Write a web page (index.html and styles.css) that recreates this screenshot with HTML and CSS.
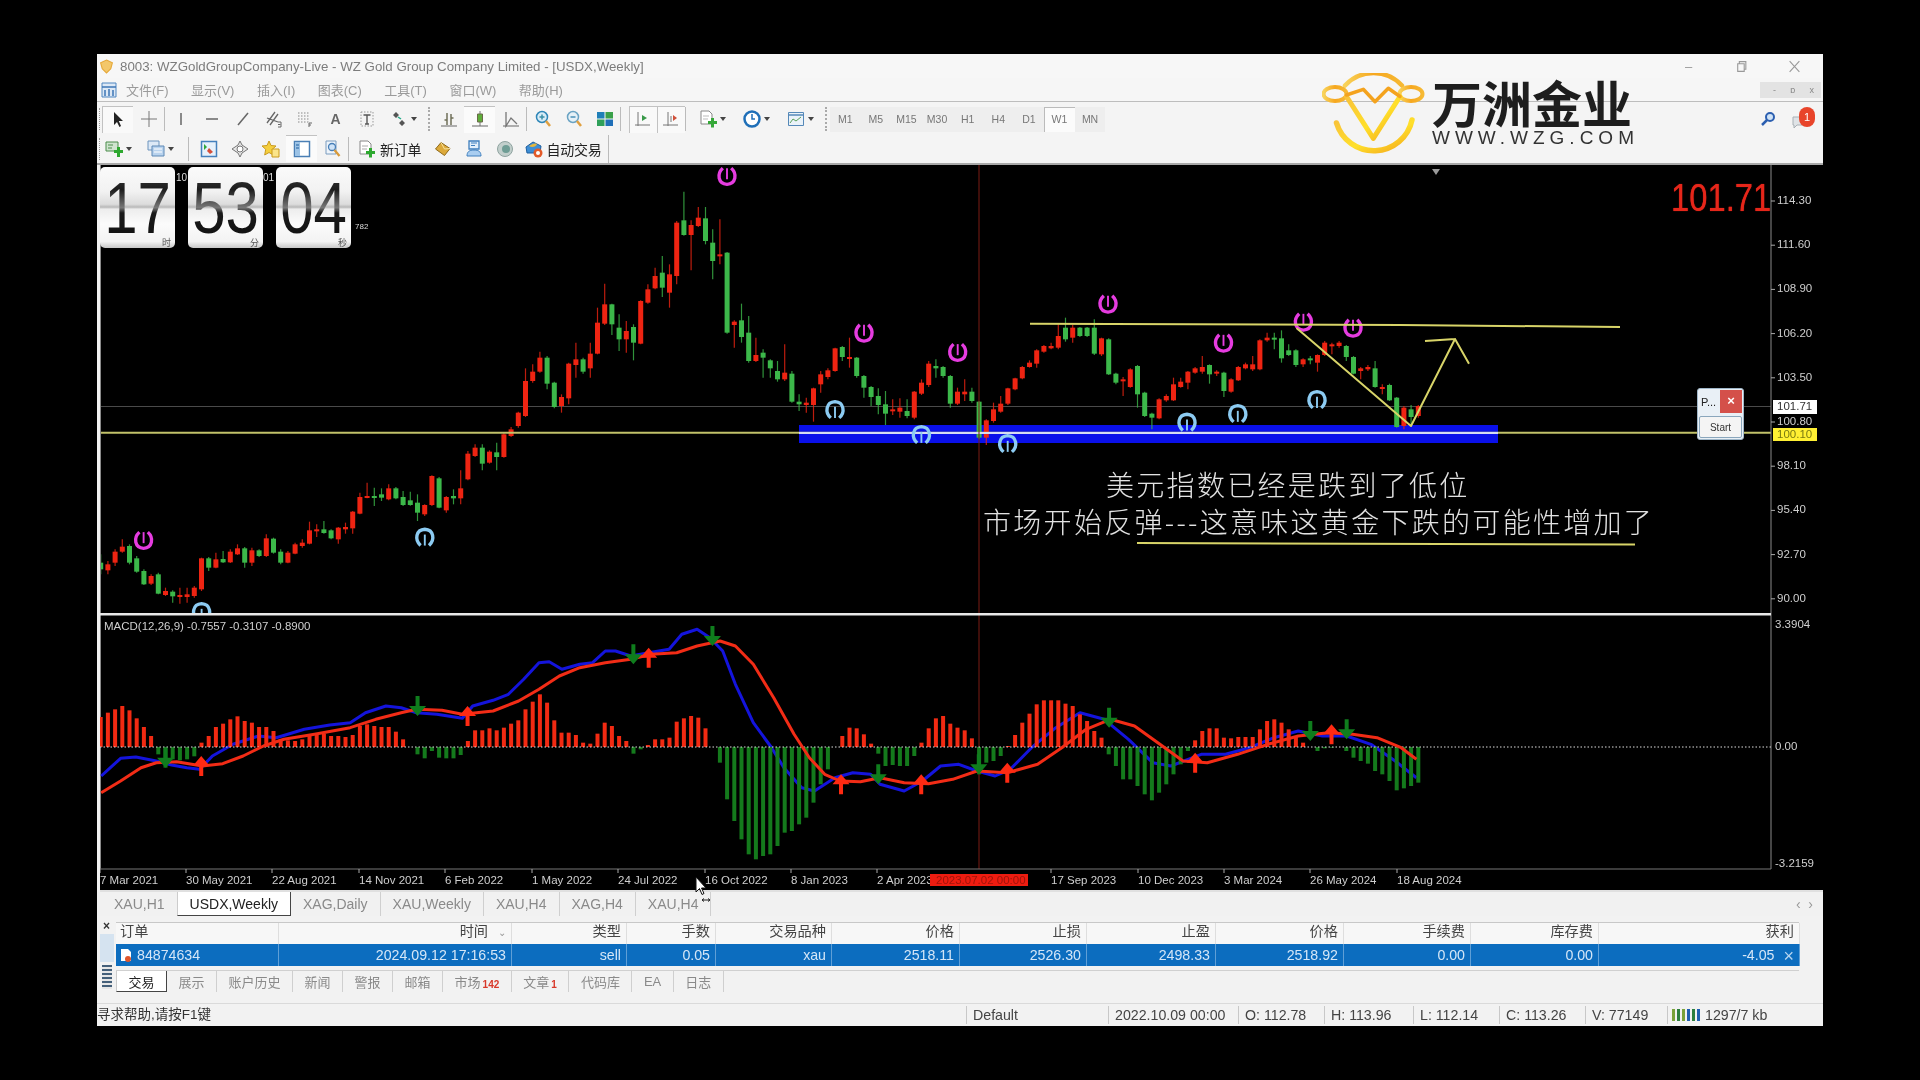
FILE: index.html
```html
<!DOCTYPE html>
<html lang="zh">
<head>
<meta charset="utf-8">
<title>MetaTrader - USDX,Weekly</title>
<link rel="stylesheet" href="styles.css">
</head>
<body>
<div class="window">
  <header class="titlebar">
    <svg class="appicon" viewBox="0 0 14 14"><path d="M7 1 12.5 3.5 11 9 7 13 3 9 1.500 3.500Z" fill="#f3c76a" stroke="#e6a93a"/></svg>
    <span class="title">8003: WZGoldGroupCompany-Live - WZ Gold Group Company Limited - [USDX,Weekly]</span>
    <div class="winbtns">
      <span class="winbtn">–</span>
      <svg class="winbtn" viewBox="0 0 12 12"><path d="M2.500 3.500h6v7h-6zM4 3.500V1.500h6v7H8.500" fill="none" stroke="#999"/></svg>
      <svg class="winbtn" viewBox="0 0 12 12"><path d="M1.500 1 10.500 11M10.500 1 1.500 11" stroke="#999" fill="none"/></svg>
    </div>
  </header>

  <nav class="menubar">
    <svg class="menuicon" viewBox="0 0 16 16"><path d="M1 1h14v14H1z" fill="#dce8f5" stroke="#4f86c0"/><path d="M1 5h14M4 14V8M8 14V7M12 14V8" stroke="#3d76b5" stroke-width="1.500"/></svg>
    <span class="menu">文件(F)</span><span class="menu">显示(V)</span><span class="menu">插入(I)</span><span class="menu">图表(C)</span><span class="menu">工具(T)</span><span class="menu">窗口(W)</span><span class="menu">帮助(H)</span>
    <div class="mdibtns"><span>-</span><span>ɒ</span><span>x</span></div>
  </nav>

  <div class="toolbar first">
    <span class="grip"></span>
    <button class="tool pressed"><svg viewBox="0 0 18 18"><path d="M5 2v13l3-3 2.500 5 1.500-1-2.200-5H14Z" fill="#222"/></svg></button>
    <button class="tool"><svg viewBox="0 0 18 18"><path d="M9 1v16M1 9h16" stroke="#777" fill="none"/></svg></button>
    <span class="sep"></span>
    <button class="tool"><svg viewBox="0 0 18 18"><path d="M9 3v12" stroke="#666" stroke-width="1.500"/></svg></button>
    <button class="tool"><svg viewBox="0 0 18 18"><path d="M3 9h12" stroke="#666" stroke-width="1.500"/></svg></button>
    <button class="tool"><svg viewBox="0 0 18 18"><path d="M4 15 14 3" stroke="#666" stroke-width="1.500"/></svg></button>
    <button class="tool"><svg viewBox="0 0 18 18"><path d="M2 13 10 2M5 15 13 4M2 8l11 4" stroke="#666" stroke-width="1.300" fill="none"/><path d="M13 12h3v5h-3m0-2.500h2.500" stroke="#666" fill="none"/></svg></button>
    <button class="tool"><svg viewBox="0 0 18 18"><path d="M2 3h11M2 6h11M2 9h11M2 12h11" stroke="#888" stroke-dasharray="1.500 1.500" fill="none"/><path d="M13 13v4m0-4h3m-3 2h2" stroke="#666" fill="none"/></svg></button>
    <button class="tool"><span class="toolA">A</span></button>
    <button class="tool"><svg viewBox="0 0 18 18"><path d="M3 2h12v14H3z" stroke="#999" stroke-dasharray="1.500 1.500" fill="none"/><path d="M5.500 5h7M9 5v9M7 14h4" stroke="#555" stroke-width="1.400" fill="none"/></svg></button>
    <button class="tool withdd shapes"><svg viewBox="0 0 18 18"><path d="M3 5 6 2l3 3-3 3ZM9 13l3-3 3 3-3 3Z" fill="#555"/><path d="M8 7l3 2" stroke="#2a8" stroke-width="1.500"/></svg><i class="dd"></i></button>
    <span class="dsep"></span>
    <button class="tool"><svg viewBox="0 0 18 18"><path d="M7 3v12M4.500 10H7M11 4v11M11 8h2.500" stroke="#6f6f58" stroke-width="1.500" fill="none"/><path d="M1 16h16" stroke="#666"/></svg></button>
    <button class="tool lit"><svg viewBox="0 0 18 18"><path d="M9 1v15" stroke="#777"/><path d="M6.500 4h5v8h-5z" fill="#5fae3a" stroke="#6a6a4a"/><path d="M1 16h16" stroke="#666"/></svg></button>
    <button class="tool"><svg viewBox="0 0 18 18"><path d="M4 2v14l5-8 6 6" stroke="#777" stroke-width="1.300" fill="none"/><path d="M1 16h16" stroke="#666"/></svg></button>
    <span class="sep"></span>
    <button class="tool"><svg viewBox="0 0 18 18"><circle cx="8" cy="7" r="5.500" fill="#d7ecf7" stroke="#2e86b8" stroke-width="1.500"/><path d="M5.500 7h5M8 4.500v5" stroke="#3a8fa8" stroke-width="1.500"/><path d="m12 11 4 5" stroke="#e0a040" stroke-width="2.500"/></svg></button>
    <button class="tool"><svg viewBox="0 0 18 18"><circle cx="8" cy="7" r="5.500" fill="#e6f1f7" stroke="#6aa3c3" stroke-width="1.500"/><path d="M5.500 7h5" stroke="#4a90b8" stroke-width="1.500"/><path d="m12 11 4 5" stroke="#e0a040" stroke-width="2.500"/></svg></button>
    <button class="tool"><svg viewBox="0 0 18 18"><path d="M1 2h7.500v6.500H1z" fill="#1f7fb8"/><path d="M9.500 2H17v6.500H9.500z" fill="#3aa04a"/><path d="M1 9.500h7.500V16H1z" fill="#2fa05a"/><path d="M9.500 9.500H17V16H9.500z" fill="#1f6fb8"/></svg></button>
    <span class="sep gapR"></span>
    <button class="tool nar pressed"><svg viewBox="0 0 18 18"><path d="M4 2v14M1 15h15" stroke="#777" fill="none"/><path d="M8 5v6l5-3Z" fill="#3a9a4a"/></svg></button>
    <button class="tool nar pressed"><svg viewBox="0 0 18 18"><path d="M6 2v14M1 15h15" stroke="#777" fill="none"/><path d="M11 5v6l4-3Z" fill="#d0503a"/><path d="M9 6v6" stroke="#777"/></svg></button>
    <span class="sep gapS"></span>
    <button class="tool withdd"><svg viewBox="0 0 18 18"><path d="M2 1h8l3 3v10H2z" fill="#fff" stroke="#888"/><path d="M4 6h6M4 9h5" stroke="#bbb"/><path d="M9 11h3V8h3v3h3v3h-3v3.500h-3V14H9z" fill="#35a838"/></svg><i class="dd"></i></button>
    <button class="tool withdd"><svg viewBox="0 0 18 18"><circle cx="9" cy="9" r="7.500" fill="#fff" stroke="#1f6fb8" stroke-width="2.500"/><path d="M9 4v5h3" stroke="#1f6fb8" stroke-width="1.500" fill="none"/></svg><i class="dd"></i></button>
    <button class="tool withdd"><svg viewBox="0 0 18 18"><path d="M1.500 2.500h15v13h-15z" fill="#eaf2f9" stroke="#5588b8"/><path d="M1.500 5h15" stroke="#5588b8" stroke-width="1.500"/><path d="m3 13 3-4 3 2 5-4" stroke="#5aa05a" fill="none"/></svg><i class="dd"></i></button>
    <span class="dsep"></span>
    <button class="tf">M1</button><button class="tf">M5</button><button class="tf">M15</button><button class="tf">M30</button><button class="tf">H1</button><button class="tf">H4</button><button class="tf">D1</button><button class="tf active">W1</button><button class="tf">MN</button>
    <div class="helpers">
      <svg class="search" viewBox="0 0 16 16"><circle cx="10" cy="6" r="4" fill="#cfe3f7" stroke="#2c5fb0" stroke-width="2"/><path d="M7 9 2 14" stroke="#2c5fb0" stroke-width="2.500"/></svg>
      <span class="bubble"><svg viewBox="0 0 18 18"><path d="M2 5h11v8H6l-3 3v-3H2z" fill="#dfe3e6" stroke="#a9b0b5"/></svg><b class="badge">1</b></span>
    </div>
  </div>

  <div class="toolbar second">
    <span class="grip"></span>
    <button class="tool withdd tight"><svg viewBox="0 0 18 18"><path d="M1 2h12v9H1z" fill="#cfe4cf" stroke="#4a8c4a"/><path d="M3 5h5M3 8h4" stroke="#4a8c4a"/><path d="M9 10h3V7h3v3h3v3h-3v4h-3v-4H9z" fill="#2da82f"/></svg><i class="dd"></i></button>
    <button class="tool withdd tight shift"><svg viewBox="0 0 18 18"><path d="M1 1h11v9H1z" fill="#dde9f6" stroke="#6d94bd"/><path d="M5 6h12v10H5z" fill="#b9d3ee" stroke="#5d88b5"/><path d="M7 9h8M7 12h8" stroke="#fff"/></svg><i class="dd"></i></button>
    <span class="sep far"></span>
    <button class="tool"><svg viewBox="0 0 18 18"><path d="M1.500 1.500h15v15h-15z" fill="#e6f1fb" stroke="#4480bd" stroke-width="1.500"/><path d="M4 4l3 3-3 3z" fill="#2fa83a"/><path d="m9 8 4 4-3 2-3-3z" fill="#d64f3a"/></svg></button>
    <button class="tool"><svg viewBox="0 0 18 18"><path d="M9 1 11 5 17 9l-6 4-2 4-2-4L1 9l6-4Z" fill="#e6e6e6" stroke="#777"/><circle cx="9" cy="9" r="3" fill="#fff" stroke="#777"/></svg></button>
    <button class="tool"><svg viewBox="0 0 18 18"><path d="m7 1 2 4.500 5 .5-3.700 3.300L11.300 15 7 12.500 2.700 15l1-5.700L0 6l5-.5z" fill="#f5cf3d" stroke="#c99a1f"/><path d="M10 9h7v8h-7z" fill="#fbe58a" stroke="#c99a1f"/></svg></button>
    <button class="tool lit"><svg viewBox="0 0 18 18"><path d="M1.500 1.500h15v15h-15z" fill="#fff" stroke="#4a7fb5" stroke-width="1.500"/><path d="M2 2h5v14H2z" fill="#9cc3e6"/><path d="M3 5h3M3 8h3" stroke="#1f5f9f"/></svg></button>
    <button class="tool"><svg viewBox="0 0 18 18"><path d="M2 1h10v13H2z" fill="#eef4fa" stroke="#7a9cbf"/><circle cx="8" cy="7" r="3.500" fill="#cfe3f7" stroke="#477fb8" stroke-width="1.300"/><path d="m10.500 10 5 6" stroke="#d89a3a" stroke-width="2.300"/></svg></button>
    <span class="sep"></span>
    <button class="tool label order"><svg viewBox="0 0 18 18"><path d="M2 1h8l3 3v10H2z" fill="#fff" stroke="#888"/><path d="M4 6h6M4 9h5" stroke="#aaa"/><path d="M8 11h3V8h3v3h3v3h-3v3.500h-3V14H8z" fill="#2da82f"/></svg><span>新订单</span></button>
    <button class="tool"><svg viewBox="0 0 18 18"><path d="M1.500 9 7 2.500 16 8.500 10.500 15.500Z" fill="#dca93a" stroke="#8f6a1a"/><path d="M7 2.500 10.500 9 16 8.500" stroke="#f7e3a0" fill="none"/></svg></button>
    <button class="tool"><svg viewBox="0 0 18 18"><path d="M4 1h10v8H4z" fill="#e2effb" stroke="#3f7fbe" stroke-width="1.300"/><path d="M6 3h6M6 5.500h4" stroke="#3f7fbe"/><path d="M2 16c0-4 2-6 7-6s7 2 7 6z" fill="#a9cdf0" stroke="#3f7fbe"/></svg></button>
    <button class="tool"><svg viewBox="0 0 18 18"><circle cx="9" cy="9" r="7.500" fill="#c2cfcc" stroke="#8fa3a0"/><circle cx="10" cy="9" r="4" fill="#6f9d95"/></svg></button>
    <button class="tool label auto"><svg viewBox="0 0 18 18"><path d="M1 7 8 2l8 4-1 7H2z" fill="#3d8ed6" stroke="#1f5f9f"/><path d="M4 6c3-2 6-3 8-2-1 3-5 4-8 2z" fill="#e6b73c"/><circle cx="13" cy="13" r="4.500" fill="#e35a28"/><circle cx="13" cy="13" r="2" fill="#fff"/></svg><span>自动交易</span></button>
    <span class="sep end"></span>
  </div>

  <main class="chart">
    <svg id="plot" class="plot" viewBox="100 164 1723 727"></svg>

    <div class="clock">
      <div class="card"><span class="digits">17</span><small class="unit">时</small></div>
      <div class="card"><span class="digits">53</span><small class="unit">分</small></div>
      <div class="card"><span class="digits">04</span><small class="unit">秒</small></div>
      <span class="mini m10">10</span><span class="mini m01">01</span><span class="mini m782">782</span>
    </div>

    <div class="bigprice">101.71</div>

    <div class="script">
      <div class="scripthead"><span>P...</span><b class="scriptclose">×</b></div>
      <button class="scriptstart">Start</button>
    </div>

    <p class="note noteA">美元指数已经是跌到了低位</p>
    <p class="note noteB">市场开始反弹---这意味这黄金下跌的可能性增加了</p>
  </main>

  <div class="charttabs">
    <span class="ctab">XAU,H1</span>
    <span class="ctab on">USDX,Weekly</span>
    <span class="ctab">XAG,Daily</span>
    <span class="ctab">XAU,Weekly</span>
    <span class="ctab">XAU,H4</span>
    <span class="ctab">XAG,H4</span>
    <span class="ctab">XAU,H4</span>
    <span class="tabarrows">‹ &nbsp;›</span>
  </div>

  <section class="terminal">
    <aside class="strip">
      <span class="stripx">×</span>
      <span class="stripbar"></span>
      <span class="stripgrip"></span>
    </aside>
    <div class="termbody">
      <div class="row head">
        <span class="first">订单</span><span>时间 <i class="sort">⌄</i></span><span>类型</span><span>手数</span><span>交易品种</span><span>价格</span><span>止损</span><span>止盈</span><span>价格</span><span>手续费</span><span>库存费</span><span>获利</span>
      </div>
      <div class="row sel">
        <span class="first"><svg class="orderic" viewBox="0 0 12 14"><path d="M1 1h7l3 3v9H1z" fill="#fff"/><circle cx="8" cy="11" r="3" fill="#e0552a"/></svg>84874634</span><span>2024.09.12 17:16:53</span><span>sell</span><span>0.05</span><span>xau</span><span>2518.11</span><span>2526.30</span><span>2498.33</span><span>2518.92</span><span>0.00</span><span>0.00</span><span>-4.05<i class="closex">×</i></span>
      </div>
      <div class="subtabs">
        <span class="stab on">交易</span><span class="stab">展示</span><span class="stab">账户历史</span><span class="stab">新闻</span><span class="stab">警报</span><span class="stab">邮箱</span><span class="stab">市场<sub>142</sub></span><span class="stab">文章<sub>1</sub></span><span class="stab">代码库</span><span class="stab">EA</span><span class="stab">日志</span>
      </div>
    </div>
  </section>

  <footer class="status">
    <span class="st help">寻求帮助,请按F1键</span>
    <span class="st w142">Default</span>
    <span class="st w130">2022.10.09 00:00</span>
    <span class="st w86">O: 112.78</span>
    <span class="st w89">H: 113.96</span>
    <span class="st w86">L: 112.14</span>
    <span class="st w86">C: 113.26</span>
    <span class="st w82">V: 77149</span>
    <span class="st last"><svg class="conn" viewBox="0 0 28 12"><path d="M0 0h3v12H0z" fill="#7aa23a"/><path d="M5 0h3v12H5z" fill="#2d7f3f"/><path d="M10 0h3v12h-3z" fill="#7aa23a"/><path d="M15 0h3v12h-3z" fill="#1f5fb0"/><path d="M20 0h3v12h-3z" fill="#2d7f3f"/><path d="M25 0h3v12h-3z" fill="#1f5fb0"/></svg>1297/7 kb</span>
  </footer>

  <div class="logo">
    <svg class="logomark" viewBox="0 0 104 82">
      <defs>
        <linearGradient id="goldL" x1="0" y1="0" x2="1" y2="1"><stop offset="0" stop-color="#f8c23a"/><stop offset=".55" stop-color="#ffe02a"/><stop offset="1" stop-color="#f3a51c"/></linearGradient>
        <linearGradient id="goldT" x1="0" y1="0" x2="1" y2="0"><stop offset="0" stop-color="#f8d35a"/><stop offset=".5" stop-color="#f6a71f"/><stop offset="1" stop-color="#f6b934"/></linearGradient>
      </defs>
      <g fill="none" stroke-linecap="round" stroke-linejoin="round">
        <path d="M23 12.500A39 39 0 0 1 80 12.500" stroke="url(#goldT)" stroke-width="4.500"/>
        <path d="M90 47A39 39 0 0 1 14.500 50" stroke="url(#goldL)" stroke-width="5.500"/>
        <ellipse cx="13" cy="21" rx="11.500" ry="7" stroke="url(#goldT)" stroke-width="4"/>
        <ellipse cx="89" cy="21" rx="11.500" ry="7" stroke="url(#goldT)" stroke-width="4"/>
        <path d="M24.500 23.500 51.300 65.300 78 23.500" stroke="url(#goldL)" stroke-width="5"/>
        <path d="M24.500 22 41.300 16.300 53 28.700 66.300 15.300 78 23.500" stroke="#f4a31e" stroke-width="3.500"/>
      </g>
    </svg>
    <div class="logotext"><span class="logocn">万洲金业</span><span class="logoen">WWW.WZG.COM</span></div>
  </div>

  <svg class="pointer" viewBox="0 0 16 28"><path d="M1 1v15l3.500-3.500 2.500 6 2-1-2.500-5.500H11Z" fill="#fff" stroke="#111"/><path d="M7 24h8M7 24l2-1.500M7 24l2 1.500M15 24l-2-1.500M15 24l-2 1.500" stroke="#222" fill="none"/></svg>
</div>
<script src="chart.js"></script>
</body>
</html>
```
FILE: styles.css
```css
* { box-sizing: border-box; }
html, body { margin: 0; height: 100%; background: #000; overflow: hidden; }
body { padding: 54px 97px; font-family: "Liberation Sans", "Noto Sans CJK SC", sans-serif; }
button { font: inherit; border: 0; background: none; padding: 0; margin: 0; }

.window {
  position: relative;
  width: 1726px;
  height: 972px;
  background: #f2f2f2;
  display: flex;
  flex-direction: column;
  overflow: hidden;
  filter: blur(.55px);
}

/* Title + menu */
.titlebar { height: 24px; flex: none; display: flex; align-items: center; padding-left: 2px; background: #f7f7f7; }
.appicon { width: 15px; height: 15px; margin-right: 6px; }
.title { font-size: 13.300px; color: #7c7c7c; white-space: nowrap; }
.winbtns { margin-left: auto; display: flex; align-items: center; gap: 40px; padding-right: 22px; }
.winbtn { width: 13px; height: 13px; color: #999; font-size: 13px; line-height: 13px; text-align: center; }

.menubar { height: 24px; flex: none; display: flex; align-items: center; padding-left: 4px; background: #f6f6f6; border-bottom: 1px solid #bdbdbd; }
.menuicon { width: 16px; height: 16px; margin-right: 9px; }
.menu { font-size: 13px; color: #9a9a9a; margin-right: 22.500px; white-space: nowrap; }
.mdibtns { margin-left: auto; width: 61px; height: 16px; margin-right: 2px; background: #e3e3e3; display: flex; justify-content: space-around; align-items: center; font-size: 9px; color: #888; padding-left: 6px; }

/* Toolbars */
.toolbar { flex: none; display: flex; align-items: center; padding-left: 2px; background: #f4f4f4; }
.toolbar.first { height: 32px; padding-top: 2px; }
.toolbar.second { height: 31px; border-bottom: 2px solid #a8a8a8; }
.grip { width: 3px; height: 22px; border-left: 1px dotted #999; margin-right: 0; }
.tool { width: 31px; height: 27px; flex: none; display: flex; align-items: center; justify-content: center; gap: 2px; }
.tool svg { width: 18px; height: 18px; display: block; flex: none; }
.tool.nar { width: 28px; }
.tool.pressed { background: #f9f9f9; box-shadow: inset 1px 1px 0 #c2c2c2; }
.tool.lit { background: #fbfbfb; box-shadow: inset 0 1px 0 #c2c2c2; }
.tool.withdd { width: 44px; }
.tool.shapes { width: 43px; }
.tool.tight { width: 32px; }
.tool.shift { margin-left: 10px; }
.tool.label { width: auto; padding: 0 3px; gap: 3px; }
.tool.order { padding: 0 6px 0 9px; gap: 4px; }
.tool.auto { padding-left: 5px; }
.tool.label span { font-size: 14px; color: #222; white-space: nowrap; font-weight: 400; letter-spacing: -.2px; }
.toolA { font-size: 14px; font-weight: 700; color: #666; }
.dd { width: 0; height: 0; border: 3px solid transparent; border-top: 4px solid #444; border-bottom: 0; margin-left: 1px; }
.sep { width: 1px; height: 24px; background: #bbb; flex: none; margin: 0; }
.sep.gapR { margin-right: 8px; }
.sep.gapS { margin-right: 4px; }
.sep.far { margin: 0 4px 0 12px; }
.sep.end { height: 28px; margin-left: 3px; }
.dsep { height: 24px; border-left: 2px dotted #aaa; margin: 0 3px; flex: none; }
.tf { width: 30.600px; height: 25px; flex: none; font-size: 10.500px; color: #777; background: #eee; }
.tf.active { background: #fbfbfb; box-shadow: inset 1px 1px 0 #bbb; }
.helpers { margin-left: auto; display: flex; align-items: center; gap: 15px; padding-right: 10px; }
.search { width: 16px; height: 16px; }
.bubble { position: relative; width: 22px; height: 22px; display: block; }
.bubble svg { width: 18px; height: 18px; position: absolute; left: 0; top: 4px; }
.badge { position: absolute; right: -2px; top: -1px; width: 16px; height: 20px; border-radius: 8px; background: #e8442a; color: #fff; font-size: 11px; line-height: 20px; text-align: center; font-weight: 400; }

/* Chart */
.chart { position: relative; flex: none; height: 727px; margin-left: 3px; background: #000; color: #ddd; overflow: hidden; }
.plot { display: block; width: 1723px; height: 727px; }
.plot text { font-family: "Liberation Sans", sans-serif; font-size: 11.500px; fill: #cfcfcf; }
.plot .tag { fill: #333; }
.plot .tagY { fill: #7a7a10; }
.plot .cross { fill: #a0140a; }

.clock { position: absolute; left: 0; top: 2px; display: flex; gap: 13px; }
.card { position: relative; width: 75px; height: 81px; border-radius: 5px; overflow: hidden; display: flex; justify-content: center; align-items: flex-start;
  background: linear-gradient(#fafafa 0, #f2f2f2 30%, #dcdcdc 46%, #b8b8b8 49.500%, #ededed 52%, #fbfbfb 70%, #f3f3f3 92%, #c8c8c8 100%); }
.digits { display: block; margin-top: 15px; font-size: 60px; line-height: 54px; transform: scale(1, 1.2);
  background: linear-gradient(#333 0, #1c1c1c 20%, #777 48%, #1a1a1a 56%, #111 100%); -webkit-background-clip: text; background-clip: text; color: transparent; }
.unit { position: absolute; right: 4px; bottom: 0; font-size: 9px; line-height: 9px; color: #555; }
.mini { position: absolute; font-size: 10px; line-height: 11px; color: #ddd; }
.m10 { left: 76px; top: 5px; }
.m01 { left: 163px; top: 5px; }
.m782 { left: 255px; top: 54px; font-size: 8px; }

.bigprice { position: absolute; right: 52px; top: 11px; font-size: 39px; line-height: 44px; color: #e6261a; transform: scaleX(.84); transform-origin: right center; text-shadow: 0 0 1px #e6261a; }

.script { position: absolute; left: 1597px; top: 223px; width: 47px; height: 52px; border-radius: 3px; background: #e9f0f6; border: 1px solid #9fb6c8; padding: 1px; display: flex; flex-direction: column; gap: 3px; }
.scripthead { display: flex; justify-content: space-between; align-items: center; font-size: 11px; color: #222; padding-left: 2px; }
.scriptclose { width: 22px; height: 23px; background: #d4504a; color: #fff; text-align: center; line-height: 22px; font-size: 13px; }
.scriptstart { height: 22px; background: #f4f4f4; border: 1px solid #8aa6bc; border-radius: 2px; font-size: 10px; color: #333; }

.note { position: absolute; margin: 0; font-family: "Noto Sans CJK SC", sans-serif; font-weight: 300; font-size: 28px; line-height: 36px; letter-spacing: 2.300px; color: #e2e2e2; white-space: nowrap; }
.noteA { left: 1006px; top: 301px; }
.noteB { left: 883px; top: 338px; }

/* Chart tabs */
.charttabs { height: 24px; flex: none; display: flex; align-items: stretch; padding-left: 5px; background: #f1f1f1; font-size: 14px; color: #8a8a8a; }
.ctab { padding: 0 12px; display: flex; align-items: center; border-right: 1px solid #cfcfcf; white-space: nowrap; }
.ctab.on { background: #fff; color: #222; border: 1px solid #444; border-top: 0; border-left-color: #ccc; margin-left: -1px; }
.tabarrows { margin-left: auto; padding-right: 10px; color: #999; align-self: center; }

/* Terminal */
.terminal { flex: none; height: 87px; display: flex; background: #f2f2f2; }
.strip { width: 19px; flex: none; display: flex; flex-direction: column; align-items: center; padding-top: 4px; }
.stripx { font-size: 12px; line-height: 12px; color: #333; font-weight: 700; }
.stripbar { width: 14px; height: 28px; margin-top: 2px; background: #d5e3f0; }
.stripgrip { width: 10px; height: 24px; margin-top: 3px; background: repeating-linear-gradient(#45607a 0 2px, #e6e6e6 2px 4px); }
.termbody { width: 1683px; padding-top: 6px; }
.row { display: grid; grid-template-columns: 163px 233px 115px 89px 116px 128px 127px 129px 128px 127px 128px 201px; align-items: center; font-size: 14.200px; }
.row > span { text-align: right; padding-right: 5px; white-space: nowrap; }
.row > span.first { text-align: left; padding-left: 4px; }
.head { height: 22px; color: #444; background: #f7f7f7; border-top: 1px solid #c8c8c8; }
.head > span { border-right: 1px solid #dedede; height: 21px; line-height: 17px; overflow: hidden; }
.sort { font-style: normal; font-size: 10px; color: #999; margin-left: 6px; }
.sel { height: 22px; background: #0c6dbf; color: #d4e6f7; }
.sel > span { border-right: 1px solid #5f9fd6; height: 22px; line-height: 22px; }
.orderic { width: 12px; height: 14px; margin-right: 5px; vertical-align: -2px; }
.closex { font-style: normal; font-size: 18px; margin-left: 9px; color: #b6d5f0; vertical-align: -2px; }
.subtabs { display: flex; height: 22px; margin-top: 4px; font-size: 13px; color: #8a8a8a; border-top: 1px solid #d0d0d0; }
.stab { padding: 0 11.500px; display: flex; align-items: center; border-right: 1px solid #cfcfcf; white-space: nowrap; }
.stab.on { background: #fff; color: #222; border: 1px solid #444; border-top: 0; border-left-color: #ccc; }
.stab sub { color: #d8392a; font-size: 10px; font-weight: 700; margin: 6px 0 0 2px; vertical-align: baseline; }

/* Status bar */
.status { flex: none; height: 25px; margin-top: auto; padding-bottom: 3px; display: flex; align-items: center; background: #f2f2f2; border-top: 1px solid #dadada; font-size: 14.200px; color: #444; }
.st { height: 18px; line-height: 18px; padding-left: 6px; border-left: 1px solid #c8c8c8; white-space: nowrap; flex: none; }
.st.help { width: 869px; border: 0; padding-left: 0; font-size: 13.500px; color: #333; }
.w142 { width: 142px; } .w130 { width: 130px; } .w89 { width: 89px; } .w86 { width: 86px; } .w82 { width: 82px; }
.st.last { display: flex; align-items: center; gap: 5px; padding-left: 4px; }
.conn { width: 28px; height: 12px; }

/* Overlays */
.logo { position: absolute; left: 1225px; top: 19px; display: flex; gap: 6px; align-items: flex-start; }
.logomark { width: 104px; height: 82px; display: block; }
.logotext { display: flex; flex-direction: column; padding-top: 3px; color: #1e1e1e; }
.logocn { font-family: "Noto Sans CJK SC", sans-serif; font-size: 50px; line-height: 50px; font-weight: 700; white-space: nowrap; }
.logoen { font-size: 19px; line-height: 20px; letter-spacing: 5px; white-space: nowrap; margin-top: 2px; color: #333; }
.pointer { position: absolute; left: 598px; top: 822px; width: 16px; height: 28px; }
```
FILE: chart.js
```js
// USDX weekly chart data: candles are "colour bodyTop bodyBottom wickTop wickBottom".
const CANDLES_A = `g 1205 1225 1180 1240|r 1210 1228 1200 1240|r 1172 1205 1165 1215|r 1157 1172 1135 1175|g 1155 1205 1150 1210|g 1192 1232 1185 1235|g 1230 1270 1225 1272|r 1245 1268 1240 1272|g 1240 1298 1235 1300|r 1290 1302 1280 1305|g 1292 1306 1288 1325|r 1302 1306 1280 1328|r 1300 1308 1280 1325|r 1280 1305 1275 1310|r 1192 1285 1190 1290|g 1192 1220 1188 1230|r 1195 1220 1175 1222|g 1194 1204 1170 1206|r 1172 1204 1165 1206|r 1162 1180 1150 1182|g 1162 1205 1158 1220|r 1168 1205 1160 1215|g 1168 1185 1165 1188|r 1132 1185 1120 1188|g 1133 1175 1130 1178|g 1172 1205 1165 1210|r 1175 1205 1170 1207|r 1150 1178 1145 1180|r 1145 1155 1135 1160|r 1108 1148 1082 1150|r 1105 1110 1090 1128|g 1105 1116 1080 1118|g 1108 1132 1105 1135|r 1100 1135 1098 1148|r 1098 1105 1085 1118|r 1052 1102 1050 1118|r 1008 1058 995 1060|r 1005 1010 965 1012|g 1005 1010 980 1035|g 1000 1010 982 1020|r 982 1015 970 1018|g 982 1012 978 1015|g 1008 1032 990 1035|g 1018 1032 992 1034|g 1025 1055 1000 1080|r 1032 1060 1030 1065|r 945 1032 943 1035|g 952 1040 948 1042|r 1008 1048 1005 1055|g 1005 1012 985 1030|r 982 1012 928 1030|r 878 955 870 958|r 860 885 850 888|g 860 908 850 928|r 872 905 868 908|g 874 888 845 928|r 820 888 815 890|r 805 825 798 828|r 755 795 752 800|r 660 765 622 768|r 632 660 610 665|r 590 632 572 635|g 590 668 585 685|g 665 738 662 742|r 708 735 700 755|r 608 712 605 730|r 595 612 545 650|g 595 632 590 638|r 578 622 545 650|r 485 578 440 580|r 430 488 368 492|g 430 490 428 522|g 500 535 460 570|r 510 535 480 575|g 498 545 490 598|r 420 548 418 550|r 385 425 370 428|r 345 382 320 385|g 335 380 285 408|r 340 395 310 440|r 185 345 180 370|g 178 222 92 224|r 192 222 178 328|r 170 195 138 198|g 172 240 138 250|g 245 300 205 355|r 280 282 175 310|g 275 515 273 518|r 482 492 478 560|g 478 528 428 545|g 515 600 465 605|r 582 600 530 603|g 575 590 565 650|g 598 622 595 650|g 630 655 600 662`;
const CANDLES_B = `r 275 295 190 300|g 278 362 270 365|g 362 370 340 390|r 365 372 350 395|r 322 372 320 422|r 280 310 270 335|r 268 288 262 295|r 202 270 200 272|g 198 228 195 240|r 228 232 170 260|g 230 285 228 290|g 285 320 282 350|g 318 348 315 375|g 345 372 322 400|g 370 398 330 432|r 385 390 355 402|r 380 392 352 410|g 390 405 355 412|r 332 410 330 415|r 305 338 295 342|r 248 312 240 318|g 255 262 235 290|g 258 285 255 290|g 285 368 282 380|r 332 368 320 372|r 332 340 295 360|g 332 360 320 365|g 362 470 360 475|r 418 470 415 492|r 385 420 365 425|r 368 392 345 395|r 322 368 320 372|r 292 325 290 328|r 258 292 255 295|r 245 258 238 260|r 208 248 205 260|r 195 212 192 215|r 195 202 185 205|r 165 200 130 205|g 140 175 110 182|r 140 170 132 185|g 140 165 138 168|g 140 165 138 168|g 140 218 115 222|r 172 220 170 225|g 175 280 172 282|g 278 305 275 310|r 295 300 288 345|r 265 318 262 320|g 255 340 252 380|g 335 405 332 408|g 398 410 395 445|r 355 412 352 415|r 345 358 340 362|r 310 358 290 360|r 302 318 290 320|r 272 305 270 325|r 262 275 258 278|r 258 272 225 278|g 252 280 250 308|r 272 278 268 285|g 275 330 272 348|r 295 332 292 335|r 258 298 255 300|r 250 262 245 265|r 250 265 225 270|r 178 265 175 268|r 170 178 155 182|g 170 175 155 205|g 172 232 148 245|g 208 222 190 225|g 208 252 205 258|r 235 250 232 258|g 232 238 225 250|r 222 245 220 272|r 185 222 180 225|r 190 195 185 220|r 185 195 180 200|g 195 228 192 240|g 228 278 225 280|r 262 270 258 295|r 258 265 252 270|g 262 318 240 320|r 318 322 310 340|g 312 358 308 360|g 350 438 348 440|r 380 435 375 445|g 385 408 372 435|r 375 405 372 410`;
const HIST = [318,305,295,285,298,322,348,375,430,470,445,448,445,436,395,375,348,338,325,316,330,335,348,348,360,385,388,390,385,372,372,368,375,375,378,372,345,340,345,348,348,362,385,408,430,442,420,440,442,442,432,390,358,358,352,358,350,338,328,295,272,250,275,328,365,365,372,395,398,368,335,345,375,390,428,415,402,385,385,380,332,322,315,320,352,408,455,565,630,685,730,745,735,730,705,665,660,640,620,575,520,475,408,375,350,352,370,398,428,465,462,465,465,435,395,352,322,315,338,350,358,382,490,455,450,435,405,372,335,308,280,268,268,268,278,285,310,330,360,380,430,465,505,505,525,550,568,545,520,490,460,420,388,360,352,352,380,382,378,378,378,355,330,325,335,355,375,395,408,420,412,410,408,420,440,450,458,480,490,510,538,532,525,515];

const BLUE_A = [[22,495],[40,470],[60,442],[90,438],[130,450],[160,462],[190,470],[215,475],[240,435],[280,400],[330,375],[365,380],[420,355],[470,342],[510,335],[540,305],[580,285],[610,290],[640,305],[680,310],[730,322],[750,285],[790,268],[820,250],[850,205],[880,155],[900,152],[925,175],[960,160],[985,155],[1010,120],[1030,120],[1060,135],[1095,125],[1135,115],[1160,70],[1190,55],[1215,80],[1240,120],[1265,220],[1300,335],[1335,408],[1360,470],[1395,530],[1420,540],[1460,500],[1495,485],[1530,490]];
const BLUE_B = [[0,520],[40,540],[70,510],[100,465],[130,460],[160,480],[190,495],[215,475],[250,410],[290,350],[330,305],[370,325],[410,385],[450,455],[480,465],[530,430],[570,430],[610,410],[650,380],[690,360],[730,375],[770,375],[810,400],[850,450],[885,500]];
const RED_A = [[22,545],[60,510],[100,470],[130,455],[170,452],[220,465],[260,458],[300,435],[340,405],[380,385],[440,370],[510,350],[560,325],[610,305],[640,295],[690,298],[730,310],[790,300],[840,270],[880,235],[920,195],[960,170],[1010,155],[1060,145],[1100,130],[1150,125],[1190,105],[1235,90],[1265,105],[1300,160],[1340,260],[1380,370],[1410,440],[1440,490],[1470,510],[1510,512]];
const RED_B = [[0,500],[40,515],[80,518],[120,505],[160,480],[210,485],[260,460],[300,410],[340,355],[380,325],[420,345],[470,410],[500,450],[540,455],[590,430],[640,400],[690,375],[740,365],[780,370],[820,380],[860,410],[885,445]];

const candleX = i => 100.7 + 7.2 * i;
const macdY = v => 610 + v / 3;
const ptA = ([x, y]) => `${(90 + x / 1.96).toFixed(1)},${macdY(y).toFixed(1)}`;
const ptB = ([x, y]) => `${(880 + x / 1.65).toFixed(1)},${macdY(y).toFixed(1)}`;

let out = '';
const line = (x1, y1, x2, y2, c, w = 1, extra = '') => { out += `<line x1="${x1}" y1="${y1}" x2="${x2}" y2="${y2}" stroke="${c}" stroke-width="${w}" ${extra}/>`; };
const label = (x, y, t, cls = '') => { out += `<text x="${x}" y="${y}" class="${cls}" dominant-baseline="middle">${t}</text>`; };

out += '<defs><clipPath id="mainclip"><rect x="100" y="164" width="1671" height="449"/></clipPath></defs>';
out += '<g clip-path="url(#mainclip)">';
line(100, 405.5, 1771, 405.5, '#4a4a4a');
out += '<rect x="799" y="424" width="699" height="18" fill="#0a10ea"/>';

// candles
const parse = (s, y0) => s.split('|').map(c => {
  const [k, t, b, wt, wb] = c.split(' ');
  return { k, t: y0 + t / 3, b: y0 + b / 3, wt: y0 + wt / 3, wb: y0 + wb / 3 };
});
[...parse(CANDLES_A, 160), ...parse(CANDLES_B, 280)].forEach((c, i) => {
  const x = candleX(i), col = c.k === 'r' ? '#ee2412' : '#3cb84a';
  line(x, c.wt, x, c.wb, col, 1.2, 'opacity=".8"');
  out += `<rect x="${x - 2.5}" y="${c.t}" width="5" height="${Math.max(c.b - c.t, 2)}" fill="${col}"/>`;
});

line(100, 431.7, 1771, 431.7, '#c2c26a', 2);
line(799, 432, 1498, 432, '#d6dcf2', 2);

// reversal markers
const shoe = (x, y, c, up) => {
  const s = up ? -1 : 1;
  out += `<g transform="translate(${x} ${y}) scale(1.05 ${1.05 * s})" fill="none" stroke="${c}"><path stroke-width="3.200" d="M-4 -7.500C-10 -2 -8.500 7.500 0 8 8.500 7.500 10 -2 4 -7.500"/><path stroke-width="1.800" d="M0 -7.500V3"/></g>`;
};
[[727,175],[143.6,539],[864,331.7],[957.7,351],[1108,302.7],[1223.500,341.7],[1303.4,320.7],[1353,326.7]].forEach(([x, y]) => shoe(x, y, '#e63ce0', false));
[[424.8,536.7],[201.6,611],[835,409],[921.4,434],[1007.7,443],[1187,421.7],[1237.8,413],[1317,399]].forEach(([x, y]) => shoe(x, y, '#8ccbf2', true));

// hand-drawn trend lines
const yellow = 'fill="none" stroke="#d8d468" stroke-width="2" stroke-linejoin="round"';
out += `<path ${yellow} d="M1030 322.7 1400 324 1620 326"/>`;
out += `<path ${yellow} d="M1296.500 327 1411 425 1455 338 1469 362.7M1425 340 1455 338"/>`;
out += `<path ${yellow} d="M1137 542 1440 543 1635 543.500"/>`;
out += '<path d="M1432 168h8l-4 6z" fill="#9a9a9a"/>';
out += '</g>';

// frames
line(979, 164, 979, 868, '#7c1d15');
line(100, 164, 100, 868, '#8a8a8a', 2);
line(1771, 164, 1771, 868, '#8a8a8a');
line(100, 868, 1771, 868, '#777');

const poly = (pts, c) => { out += `<polyline points="${pts}" fill="none" stroke="${c}" stroke-width="3" stroke-linejoin="round"/>`; };

// MACD main line runs behind the histogram, the signal line over it
poly([...BLUE_A.map(ptA), ...BLUE_B.map(ptB)].join(' '), '#1414dc');
HIST.forEach((v, i) => {
  if (v === 408) return;
  const y = macdY(v), x = candleX(i) - 2;
  out += `<rect x="${x}" y="${Math.min(y, 746)}" width="4" height="${Math.abs(y - 746)}" fill="${v < 408 ? '#f22a12' : '#147a1c'}"/>`;
});
line(100, 746, 1771, 746, '#ddd', 1, 'stroke-dasharray="1.500 2"');
poly([...RED_A.map(ptA), ...RED_B.map(ptB)].join(' '), '#f22c16');

// signal arrows
const arrow = (x, tip, down) => {
  const s = down ? -1 : 1, c = down ? '#0f7d1d' : '#ff2a12';
  out += `<path d="M${x} ${tip}l-8.500 ${10 * s}h6.500v${10 * s}h4v${-10 * s}h6.500z" fill="${c}"/>`;
};
const ax = cx => 90 + cx / 1.96, bx = cx => 880 + cx / 1.65;
[[148,470],[642,315],[1065,160],[1220,105],[1545,520]].forEach(([x, y]) => arrow(ax(x), macdY(y), true));
[[218,435],[740,285],[1095,110],[1472,490]].forEach(([x, y]) => arrow(ax(x), macdY(y), false));
[[163,490],[378,350],[710,390],[770,385]].forEach(([x, y]) => arrow(bx(x), macdY(y), true));
[[68,490],[210,455],[520,425],[745,340]].forEach(([x, y]) => arrow(bx(x), macdY(y), false));

// panel separators
out += '<rect x="100" y="612" width="1671" height="2.500" fill="#e8e8e8"/>';
out += '<rect x="100" y="889" width="1723" height="3" fill="#e0e0e0"/>';

// price axis
['114.30','111.60','108.90','106.20','103.50','100.80','98.10','95.40','92.70','90.00'].forEach((t, i) => {
  const y = 200 + 44.2 * i;
  line(1771, y, 1775, y, '#aaa');
  label(1777, y, t);
});
out += '<rect x="1773" y="399" width="44" height="14" fill="#fff"/>';
label(1777, 406, '101.71', 'tag');
out += '<rect x="1773" y="427" width="44" height="13" fill="#fff033"/>';
label(1777, 433.5, '100.10', 'tagY');

// MACD axis + caption
label(1775, 624, '3.3904');
label(1775, 746, '0.00');
label(1775, 863, '-3.2159');
label(104, 626, 'MACD(12,26,9) -0.7557 -0.3107 -0.8900');

// time axis
[['7 Mar 2021',100],['30 May 2021',186],['22 Aug 2021',272],['14 Nov 2021',359],['6 Feb 2022',445],['1 May 2022',532],['24 Jul 2022',618],['16 Oct 2022',705],['8 Jan 2023',791],['2 Apr 2023',877],['17 Sep 2023',1051],['10 Dec 2023',1138],['3 Mar 2024',1224],['26 May 2024',1310],['18 Aug 2024',1397]].forEach(([t, x]) => {
  line(x, 868, x, 872, '#aaa');
  label(x, 880, t);
});
out += '<rect x="930" y="873" width="98" height="12" fill="#ee1c10"/>';
label(936, 879.5, '2023.07.02 00:00', 'cross');

document.getElementById('plot').innerHTML = out;
```
